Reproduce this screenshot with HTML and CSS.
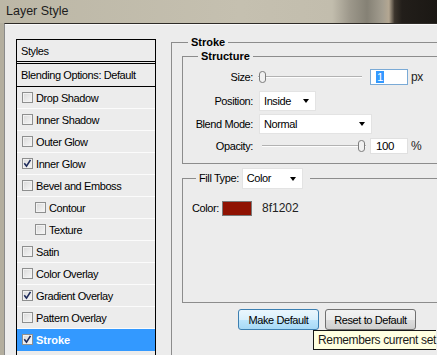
FILE: index.html
```html
<!DOCTYPE html>
<html lang="en">
<head>
    <meta charset="UTF-8">
    <meta name="viewport" content="width=device-width, initial-scale=1.0">
    <title>Layer Style</title>
    <link rel="stylesheet" href="styles.css">
</head>
<body>
    <div class="titlebar">Layer Style</div>

    <div class="window">
        <div class="client">
            <ul class="styles-list">
                <li class="head">Styles</li>
                <li class="head blend">Blending Options: Default</li>
                <li><span class="cb"></span>Drop Shadow</li>
                <li><span class="cb"></span>Inner Shadow</li>
                <li><span class="cb"></span>Outer Glow</li>
                <li><span class="cb"><svg viewBox="0 0 11 11"><path d="M2.3 5.2l2.2 3 4-6.4"/></svg></span>Inner Glow</li>
                <li><span class="cb"></span>Bevel and Emboss</li>
                <li class="sub"><span class="cb"></span>Contour</li>
                <li class="sub"><span class="cb"></span>Texture</li>
                <li><span class="cb"></span>Satin</li>
                <li><span class="cb"></span>Color Overlay</li>
                <li><span class="cb"><svg viewBox="0 0 11 11"><path d="M2.3 5.2l2.2 3 4-6.4"/></svg></span>Gradient Overlay</li>
                <li><span class="cb"></span>Pattern Overlay</li>
                <li class="selected"><span class="cb"><svg viewBox="0 0 11 11"><path d="M2.3 5.2l2.2 3 4-6.4"/></svg></span>Stroke</li>
                <li class="empty"></li>
            </ul>

            <div class="panel">
                <fieldset class="group outer">
                    <legend>Stroke</legend>

                    <fieldset class="group structure">
                        <legend>Structure</legend>
                        <div class="form-grid">
                            <label>Size:</label>
                            <div class="control">
                                <div class="slider">
                                    <svg class="thumb" viewBox="0 0 9 12"><path d="M1.5 3Q1.5 .5 4.5 .5T7.5 3V9Q7.5 11.5 4.5 11.5T1.5 9Z"/></svg>
                                </div>
                                <div class="num focus"><span class="sel">1</span></div>
                                <span class="unit">px</span>
                            </div>

                            <label>Position:</label>
                            <div class="control">
                                <div class="select pos">Inside<span class="arrow"></span></div>
                            </div>

                            <label>Blend Mode:</label>
                            <div class="control">
                                <div class="select mode">Normal<span class="arrow"></span></div>
                            </div>

                            <label>Opacity:</label>
                            <div class="control">
                                <div class="slider opacity">
                                    <svg class="thumb" viewBox="0 0 9 12"><path d="M1.5 3Q1.5 .5 4.5 .5T7.5 3V9Q7.5 11.5 4.5 11.5T1.5 9Z"/></svg>
                                </div>
                                <div class="num">100</div>
                                <span class="unit">%</span>
                            </div>
                        </div>
                    </fieldset>

                    <fieldset class="group fill">
                        <legend><span>Fill Type:</span><span class="select fill-type">Color<span class="arrow"></span></span></legend>
                        <div class="color-row">
                            <span>Color:</span>
                            <span class="swatch"></span>
                            <span class="hex">8f1202</span>
                        </div>
                    </fieldset>

                    <div class="buttons">
                        <button class="btn primary">Make Default</button>
                        <button class="btn">Reset to Default</button>
                    </div>
                </fieldset>
            </div>
        </div>
    </div>

    <div class="tooltip">Remembers current set</div>
</body>
</html>
```

FILE: styles.css
```css
html, body {
    margin: 0;
    width: 437px;
    height: 355px;
    overflow: hidden;
}
body {
    font-family: "Liberation Sans", Arial, sans-serif;
    font-size: 11px;
    letter-spacing: -0.4px;
    color: #000;
    background: #b6b1a1;
    position: relative;
}
.titlebar {
    height: 23px;
    line-height: 22px;
    padding-left: 6px;
    font-size: 12.5px;
    letter-spacing: 0;
    color: #1c1c1c;
    background: linear-gradient(to right, #bcb7a6 0, #c5c0b0 55%, #c2bdad 76%, #9d988b 80%, #858175 84%, #a39d8f 87.5%, #b4a792 89%, #3b342c 90.3%, #221e1a 92%, #1b1814 100%);
}
.window {
    display: flex;
    height: 332px;
    padding-left: 4px;
    background: #b3ae9e;
}
.client {
    flex: 1;
    display: flex;
    gap: 15px;
    padding: 12px 0 0 11px;
    background: #ececec;
    border-left: 1px solid #8a8a8a;
    border-top: 1px solid #2e2b27;
    box-shadow: inset 0 1px 0 #fafafa;
    overflow: hidden;
}

/* styles list */
.styles-list {
    list-style: none;
    margin: 3px 0 0;
    padding: 0;
    width: 138px;
    flex-shrink: 0;
    border: 1px solid #000;
    border-bottom: none;
    background: #ececec;
}
.styles-list li {
    height: 21px;
    display: flex;
    align-items: center;
    gap: 3px;
    padding-left: 5px;
    border-bottom: 1px solid #fbfbfb;
}
.styles-list li.sub {
    padding-left: 18px;
}
.styles-list li.head {
    padding-left: 4px;
    border-bottom: 1px solid #000;
}
.styles-list li.blend {
    height: 22px;
    margin-top: 1px;
    border-top: 1px solid #000;
}
.styles-list li.selected {
    background: #3399ff;
    border-bottom-color: #3399ff;
    color: #fff;
    font-weight: bold;
    letter-spacing: 0;
}
.styles-list li.empty {
    border-bottom: none;
}
.cb {
    width: 11px;
    height: 11px;
    box-sizing: border-box;
    border: 1px solid #8e8f8f;
    background: linear-gradient(135deg, #d9d9d9, #f7f7f7);
    box-shadow: inset 0 0 0 1px #f2f2f2;
    display: flex;
}
.cb svg {
    width: 11px;
    height: 11px;
    margin: -1px;
}
.cb path {
    fill: none;
    stroke: #1d2a5a;
    stroke-width: 1.6;
}

/* right panel */
.group {
    margin: 0;
    border: 1px solid #8c8c8c;
    min-width: 0;
}
.group > legend {
    padding: 0 3px;
    line-height: 13px;
    font-weight: bold;
    letter-spacing: 0;
}
.outer {
    width: 320px;
    height: 340px;
    padding: 1px 0 0 10px;
    box-sizing: border-box;
}
.outer > legend {
    margin-left: 6px;
}
.structure {
    width: 300px;
    padding: 2px 0 6px 0;
}
.structure > legend {
    margin-left: 15px;
}
.form-grid {
    display: grid;
    grid-template-columns: 70px auto;
    grid-template-rows: 24px 23px 23px 22px;
    column-gap: 5px;
    align-items: center;
}
.form-grid label {
    text-align: right;
}
.control {
    display: flex;
    align-items: center;
}
.slider {
    width: 104px;
    height: 12px;
    display: flex;
    align-items: center;
    background: linear-gradient(#ececec 5px, #b2b2b2 5px, #b2b2b2 6px, #fdfdfd 6px, #fdfdfd 7px, #ececec 7px);
    margin-right: 8px;
}
.slider.opacity {
    width: 104px;
    margin-left: 4px;
    margin-right: 4px;
    justify-content: flex-end;
}
.thumb {
    width: 9px;
    height: 12px;
}
.thumb path {
    fill: #f1f1f1;
    stroke: #7d7d7d;
    stroke-width: 1;
}
.num {
    width: 38px;
    height: 16px;
    box-sizing: border-box;
    padding-left: 5px;
    border: 1px solid #e0e0e0;
    background: #fff;
    line-height: 14px;
    font-size: 11.5px;
}
.num.focus {
    border-color: #7aaad6;
}
.sel {
    background: #3399ff;
    color: #fff;
    padding: 0 1px;
}
.unit {
    margin-left: 3px;
    font-size: 12px;
    color: #222;
}
.select {
    height: 20px;
    box-sizing: border-box;
    display: flex;
    align-items: center;
    justify-content: space-between;
    padding: 0 6px 0 4px;
    background: #fff;
    border: 1px solid #e3e3e3;
    font-weight: normal;
}
.select.pos {
    width: 57px;
    margin-left: 1px;
}
.select.mode {
    width: 113px;
    margin-left: 1px;
}
.arrow {
    width: 0;
    height: 0;
    border-left: 3.5px solid transparent;
    border-right: 3.5px solid transparent;
    border-top: 4px solid #000;
}
.fill {
    width: 300px;
    margin-top: 4px;
    padding: 11px 0 86px 9px;
    box-sizing: content-box;
}
.fill > legend {
    display: flex;
    align-items: center;
    gap: 3px;
    margin-left: 4px;
    padding: 0 7px 0 3px;
    font-weight: normal;
    letter-spacing: -0.4px;
}
.select.fill-type {
    width: 61px;
    height: 21px;
}
.color-row {
    height: 16px;
    display: flex;
    align-items: center;
}
.swatch {
    width: 30px;
    height: 15px;
    box-sizing: border-box;
    margin-left: 3px;
    background: #8f1202;
    border: 1px solid #7a7a7a;
}
.hex {
    margin-left: 10px;
    font-size: 12px;
    letter-spacing: 0;
    color: #222;
}
.buttons {
    display: flex;
    gap: 6px;
    margin-top: 6px;
    padding-left: 56px;
}
.btn {
    height: 21px;
    width: 91px;
    padding: 0;
    font-family: inherit;
    font-size: 11px;
    letter-spacing: -0.4px;
    color: #000;
    border: 1px solid #707070;
    border-radius: 3px;
    background: linear-gradient(#f2f2f2 0, #ebebeb 50%, #dddddd 50%, #cfcfcf 100%);
}
.btn.primary {
    width: 81px;
    border-color: #3c7fb1;
    background: linear-gradient(#eaf6fd 0, #d9f0fc 50%, #bee6fd 50%, #a7d9f5 100%);
}

.tooltip {
    position: absolute;
    left: 313px;
    top: 330px;
    height: 20px;
    box-sizing: border-box;
    padding: 0 0 0 4px;
    white-space: nowrap;
    line-height: 18px;
    font-size: 12px;
    letter-spacing: -0.35px;
    color: #1a1a1a;
    background: #ffffe1;
    border: 1px solid #161616;
    border-right: none;
}
```
